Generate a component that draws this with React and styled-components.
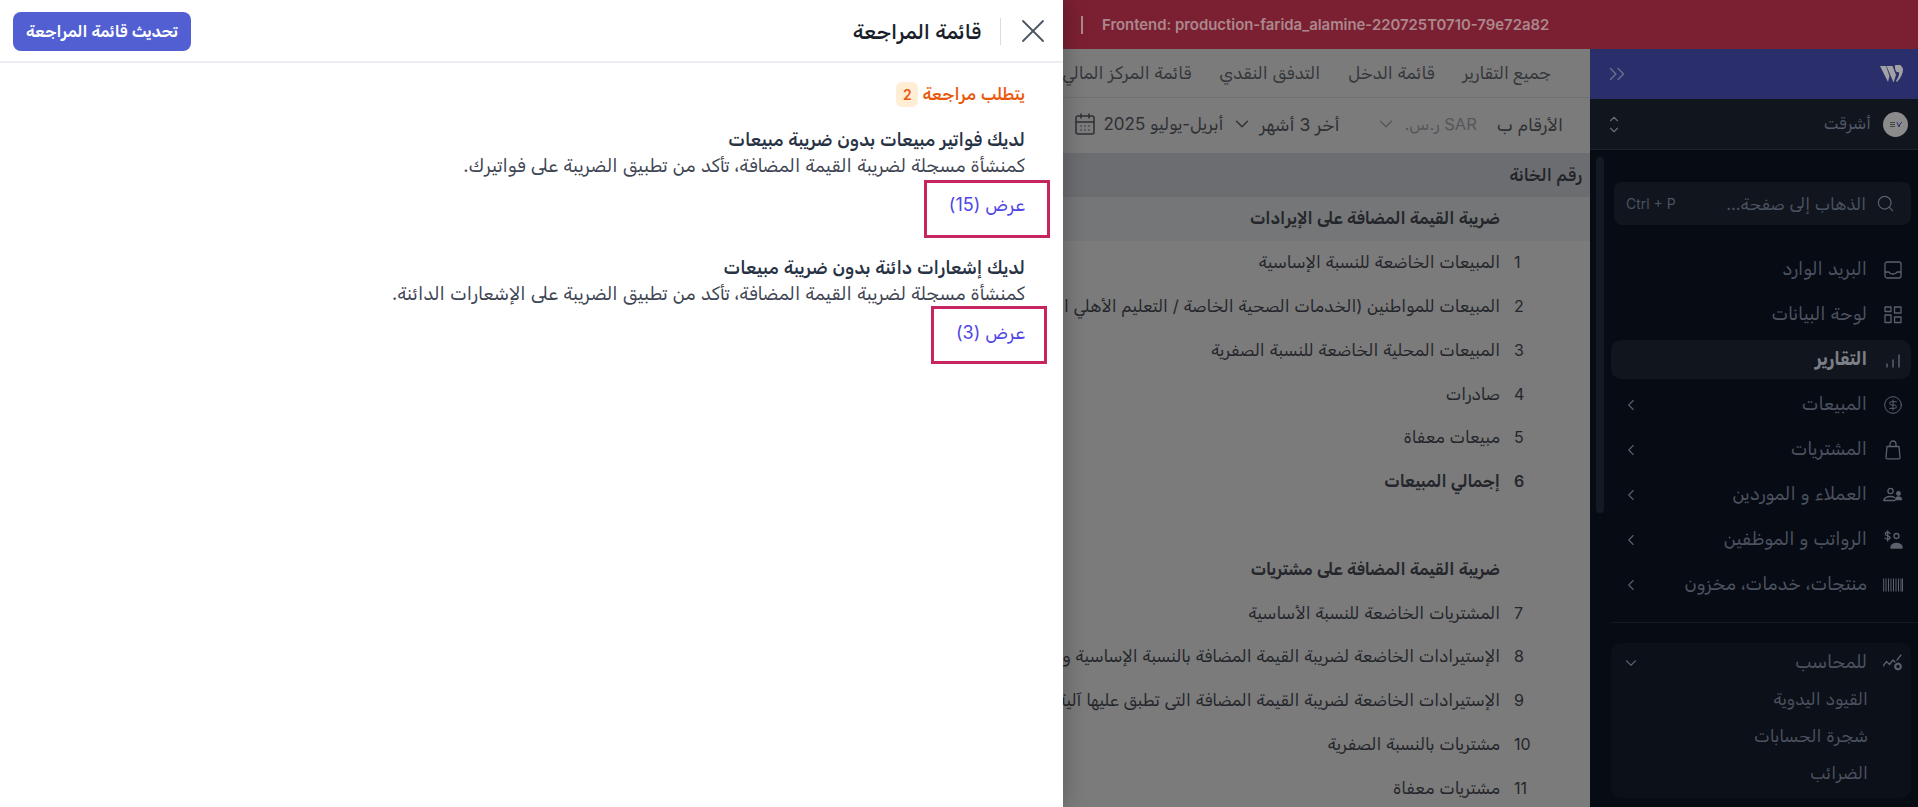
import React from 'react';
import styled, { createGlobalStyle } from 'styled-components';
import { ChevronLeft, ChevronDown, ChevronUp, ChevronsRight, Search, CircleDollarSign, CalendarDays, X } from 'lucide-react';

const FONT = `"Inter", "Rubik", "Noto Sans Arabic", "DejaVu Sans", sans-serif`;

const Global = createGlobalStyle`
  html, body { margin: 0; padding: 0; height: 100%; overflow: hidden; }
  body { font-family: ${FONT}; background: #7b7b7b; }
  * { box-sizing: border-box; }
`;

const Page = styled.div`position: relative; width: 1918px; height: 807px; overflow: hidden; display: flex; flex-direction: column;`;
const TopBar = styled.div`height: 49px; background: #7b2032; display: flex; align-items: center; direction: ltr; padding-left: 1081px; flex: none;`;
const TopDivider = styled.span`width: 2px; height: 18px; background: #a98a8e; margin-right: 19px;`;
const BuildInfo = styled.span`font: 600 14.9px/20px Inter, sans-serif; color: #ab888d; white-space: nowrap;`;
const Shell = styled.div`flex: 1; display: flex; min-height: 0;`;

const Sidebar = styled.aside`position: relative; width: 328px; flex: none; background: #070b14; display: flex; flex-direction: column;`;
const LogoBar = styled.div`height: 50px; background: #2a2f6b; display: flex; align-items: center; justify-content: space-between; padding: 0 14px 0 14px; flex: none;`;
const OrgBar = styled.div`height: 51px; background: #11151d; border-bottom: 1px solid #1e2229; display: flex; align-items: center; gap: 12px; padding: 0 10px 0 17px; flex: none; color: #535a69; font-size: 16px;`;
const Avatar = styled.span`width: 25px; height: 25px; border-radius: 50%; background: #8b8b8b; display: flex; align-items: center; justify-content: center; flex: none;`;
const OrgName = styled.span`flex: 1; padding-bottom: 2px;`;
const UpDown = styled.span`display: flex; flex-direction: column; color: #676c75; line-height: 0; svg + svg { margin-top: -3px; }`;
const Scrollbar = styled.div`position: absolute; left: 6px; top: 108px; width: 8px; height: 356px; border-radius: 4px; background: #141924;`;
const SideBody = styled.div`flex: 1; padding: 32px 7px 0 21px; display: flex; flex-direction: column;`;
const SearchBox = styled.div`height: 43px; width: 297px; align-self: flex-start; background: #11151d; border-radius: 8px; display: flex; align-items: center; gap: 10px; padding: 0 16px 0 12px; font-size: 16.7px; flex: none;`;
const SearchText = styled.span`flex: 1; color: #4a5361;`;
const Shortcut = styled.span`direction: ltr; font: 400 14px Inter, sans-serif; color: #4a5361;`;
const NavList = styled.nav`margin-top: 25px; display: flex; flex-direction: column; gap: 6px;`;
const NavItem = styled.div`height: 39px; display: flex; align-items: center; gap: 16px; padding: 0 8px 0 11px; border-radius: 10px; font-size: 18px;
  color: ${p => (p.$active ? '#7c7f85' : '#4b5260')}; font-weight: ${p => (p.$active ? 700 : 400)};
  background: ${p => (p.$active ? '#11151d' : 'transparent')};`;
const NavIcon = styled.span`width: 20px; height: 20px; display: flex; align-items: center; justify-content: center; color: #5a606c; flex: none;`;
const NavLabel = styled.span`flex: 1; white-space: nowrap; padding-bottom: 2px;`;
const NavChevron = styled.span`display: flex; color: #5a606c;`;
const SideRule = styled.div`height: 1px; background: #141820; margin: 18px 0 20px; margin-right: -7px;`;
const Group = styled.div`background: #0c1018; border-radius: 10px; padding-bottom: 5px; display: flex; flex-direction: column;`;
const SubItem = styled.div`height: 37px; display: flex; align-items: center; padding: 0 43px 3px 0; color: #4b5260; font-size: 17px;`;

const Main = styled.main`flex: 1; min-width: 0; background: #7b7b7b; display: flex; flex-direction: column; overflow: hidden;`;
const Tabs = styled.div`height: 49px; flex: none; display: flex; align-items: center; gap: 28px; padding-right: 39px; border-bottom: 1px solid #707174; font-size: 17px; color: #34363a; white-space: nowrap;`;
const Filters = styled.div`height: 52px; flex: none; display: flex; align-items: center; padding-right: 27px; font-size: 17.5px; color: #2e3034; white-space: nowrap;`;
const Currency = styled.span`display: flex; align-items: center; gap: 8px; margin-right: 20px; color: #55575b; font-size: 16.5px;`;
const Period = styled.span`display: flex; align-items: center; gap: 6px; margin-right: 35px;`;
const DateRange = styled.span`display: flex; align-items: center; gap: 7px; margin-right: 8px; font-size: 17px;`;
const HeadRow = styled.div`height: 44px; margin-top: 3px; flex: none; display: flex; align-items: center; padding-right: 8px; background: #6c6d70; color: #212329; font-size: 17px; font-weight: 500;`;
const Row = styled.div`height: 43.8px; flex: none; display: flex; align-items: center; white-space: nowrap; font-size: 16.8px; color: #24262b; padding-bottom: 1px;
  font-weight: ${p => (p.$bold ? 600 : 400)};
  background: ${p => (p.$tint ? '#757678' : 'transparent')};`;
const RowNum = styled.span`width: 76px; flex: none; text-align: left; font-family: Inter, sans-serif; font-size: 16px;`;
const RowLabel = styled.span`padding-right: 14px;`;

const Drawer = styled.section`position: absolute; left: 0; top: 0; bottom: 0; width: 1063px; background: #fff; box-shadow: 0 0 22px rgba(0,0,0,.28); display: flex; flex-direction: column;`;
const DrawerHead = styled.header`height: 63px; flex: none; border-bottom: 2px solid #eceef3; display: flex; align-items: center; padding: 1px 10px 0 13px;`;
const CloseBtn = styled.span`display: flex; color: #4b5563; flex: none;`;
const HeadRule = styled.span`width: 1px; height: 27px; background: #d9dce2; margin: 0 12px 0 19px; flex: none;`;
const Title = styled.h1`margin: 0; flex: 1; font-size: 20.4px; font-weight: 500; color: #1a1f2b;`;
const Refresh = styled.button`height: 39px; width: 178px; border: 0; border-radius: 8px; background: #515fd3; color: #fff; font: 600 16px ${FONT};`;
const DrawerBody = styled.div`padding: 18px 38px 0 0; display: flex; flex-direction: column; align-items: flex-start;`;
const Needs = styled.div`display: flex; align-items: center; gap: 4px; height: 26px; color: #ea580c; font-size: 17px; font-weight: 500;`;
const Badge = styled.span`width: 22px; height: 25px; border-radius: 6px; background: #ffedd5; display: flex; align-items: center; justify-content: center; font: 600 14px Inter, sans-serif;`;
const Check = styled.article`margin-top: ${p => p.$top}px; display: flex; flex-direction: column;`;
const CheckTitle = styled.h2`margin: 0; font-size: 18.1px; line-height: 25px; font-weight: 500; color: #273244;`;
const CheckText = styled.p`margin: 0; font-size: 18.2px; line-height: 27px; color: #3f4654;`;
const LinkWrap = styled.a`position: relative; align-self: flex-start; margin-top: ${p => p.$top}px; color: #4f46e5; font-size: 18px; line-height: 24px;`;
const Callout = styled.span`position: absolute; top: ${p => p.$t}px; right: ${p => p.$r}px; bottom: ${p => p.$b}px; left: ${p => p.$l}px; border: 3px solid #c72560;`;

const Ico = ({ children, w = 20, h = 20 }) => (
  <svg width={w} height={h} viewBox={`0 0 ${w} ${h}`} fill="none" stroke="currentColor" strokeWidth="1.3" strokeLinecap="round" strokeLinejoin="round">{children}</svg>
);
const Inbox = () => <Ico><rect x="2" y="2" width="16" height="16" rx="2" /><path d="M2 12h4c.6 1.400 2 2 4 2s3.400-.6 4-2h4" /></Ico>;
const Dash = () => <Ico><rect x="2" y="2" width="6" height="4.500" /><rect x="11.500" y="2" width="6.500" height="6" /><rect x="2" y="10" width="6" height="7.500" /><rect x="11.500" y="12" width="6.500" height="5.500" /></Ico>;
const Bars = () => <Ico><path d="M4 17v-3M10 17v-7M16 17V5" strokeWidth="1.500" /></Ico>;
const Bag = () => <Ico><path d="M4 6.500h12l1 11a1.200 1.200 0 0 1-1.200 1.300H4.200A1.200 1.200 0 0 1 3 17.500z" /><path d="M7 6.500V4a3 3 0 0 1 6 0v2.500" /></Ico>;
const People = () => <Ico><circle cx="7.500" cy="6" r="2.600" /><path d="M.8 15.500c.6-2.600 3.400-4 6.700-4 1.600 0 3 .3 4 1" /><path d="M.8 15.500h11" /><circle cx="15.500" cy="8.500" r="1.800" fill="currentColor" /><path d="M12.500 14.500c.3-1.600 1.500-2.500 3-2.500s2.700.9 3 2.500z" fill="currentColor" /></Ico>;
const Payroll = () => <Ico><path d="M7 3.500C6.400 2.600 5.600 2.200 4.600 2.200 3.300 2.200 2.300 3 2.300 4c0 2.400 4.800 1.200 4.800 3.600 0 1-1 1.800-2.400 1.800-1.200 0-2.100-.5-2.700-1.400M4.700 1v10" /><circle cx="13.500" cy="6" r="2.500" /><path d="M8 18v-1c0-2 2.500-3.500 5.500-3.500s5.500 1.500 5.500 3.500v1z" fill="currentColor" /></Ico>;
const Barcode = () => <Ico><path d="M.7 3.500v13M3 3.500v13M5.500 3.500v13M8 3.500v13M10.500 3.500v13M13 3.500v13M15.500 3.500v13M18 3.500v13M19.500 3.500v13" strokeWidth="1" strokeLinecap="butt" /></Ico>;
const Accountant = () => <Ico><path d="M0 13l3.500-4.500 3 3L10 7l2 2" /><path d="M14 7l4-5" /><circle cx="15" cy="13.500" r="2.800" strokeWidth="2.200" strokeDasharray="2 1" /></Ico>;
const Logo = () => (
  <svg width="24" height="18" viewBox="0 0 24 18" fill="#a1a1a6"><path d="M0 1h6l3.500 10L8 17zM6.500 1h6l3.500 9-2.500 7.500z" /><path d="M15 2.500a3 3 0 0 1 6-1.500c3.500 2 2.500 9-4 16l-1-1c2-3 3.500-6 3-9-2 1-4 -1-4-4.500z" /></svg>
);

const group1 = [
  ['1', 'المبيعات الخاضعة للنسبة الإساسية'],
  ['2', 'المبيعات للمواطنين (الخدمات الصحية الخاصة / التعليم الأهلي الخاص)'],
  ['3', 'المبيعات المحلية الخاضعة للنسبة الصفرية'],
  ['4', 'صادرات'],
  ['5', 'مبيعات معفاة'],
];
const group2 = [
  ['7', 'المشتريات الخاضعة للنسبة الأساسية'],
  ['8', 'الإستيرادات الخاضعة لضريبة القيمة المضافة بالنسبة الإساسية و الخاضعة للنسبة'],
  ['9', 'الإستيرادات الخاضعة لضريبة القيمة المضافة التى تطبق عليها آلية الإحتساب العكسي'],
  ['10', 'مشتريات بالنسبة الصفرية'],
  ['11', 'مشتريات معفاة'],
];
const nav = [
  [<Inbox />, 'البريد الوارد', false],
  [<Dash />, 'لوحة البيانات', false],
  [<Bars />, 'التقارير', false, true],
  [<CircleDollarSign size={22} strokeWidth={1.2} />, 'المبيعات', true],
  [<Bag />, 'المشتريات', true],
  [<People />, 'العملاء و الموردين', true],
  [<Payroll />, 'الرواتب و الموظفين', true],
  [<Barcode />, 'منتجات، خدمات، مخزون', true],
];

export default function App() {
  return (
    <Page dir="rtl">
      <Global />
      <TopBar><TopDivider /><BuildInfo>Frontend: production-farida_alamine-220725T0710-79e72a82</BuildInfo></TopBar>
      <Shell>
        <Sidebar>
          <LogoBar><Logo /><ChevronsRight size={26} color="#6b6e8c" strokeWidth={1.3} /></LogoBar>
          <OrgBar>
            <Avatar><svg width="14" height="7" viewBox="0 0 14 7"><path d="M1 1h5v1H1zM1 3h5v1H1zM1 5h5v1H1z" fill="#444" /><path d="M8 1l2 5 1-3 2-2" stroke="#2a2f6b" fill="none" /></svg></Avatar>
            <OrgName>أشرقت</OrgName>
            <UpDown><ChevronUp size={14} /><ChevronDown size={14} /></UpDown>
          </OrgBar>
          <Scrollbar />
          <SideBody>
            <SearchBox>
              <Search size={19} strokeWidth={1.5} color="#5a606c" />
              <SearchText>الذهاب إلى صفحة...</SearchText>
              <Shortcut>Ctrl + P</Shortcut>
            </SearchBox>
            <NavList>
              {nav.map(([icon, label, chev, active]) => (
                <NavItem key={label} $active={active}>
                  <NavIcon>{icon}</NavIcon>
                  <NavLabel>{label}</NavLabel>
                  {chev && <NavChevron><ChevronLeft size={18} strokeWidth={1.5} /></NavChevron>}
                </NavItem>
              ))}
            </NavList>
            <SideRule />
            <Group>
              <NavItem>
                <NavIcon><Accountant /></NavIcon>
                <NavLabel>للمحاسب</NavLabel>
                <NavChevron><ChevronDown size={18} strokeWidth={1.5} /></NavChevron>
              </NavItem>
              <SubItem>القيود اليدوية</SubItem>
              <SubItem>شجرة الحسابات</SubItem>
              <SubItem>الضرائب</SubItem>
            </Group>
          </SideBody>
        </Sidebar>
        <Main>
          <Tabs>
            <span>جميع التقارير</span>
            <span>قائمة الدخل</span>
            <span>التدفق النقدي</span>
            <span>قائمة المركز المالي</span>
          </Tabs>
          <Filters>
            <span>الأرقام ب</span>
            <Currency>SAR ر.س. <ChevronDown size={22} strokeWidth={1.5} /></Currency>
            <Period>أخر 3 أشهر <ChevronDown size={22} strokeWidth={1.5} /></Period>
            <DateRange>أبريل-يوليو 2025 <CalendarDays size={24} strokeWidth={1.5} /></DateRange>
          </Filters>
          <HeadRow>رقم الخانة</HeadRow>
          <Row $bold $tint><RowNum /><RowLabel>ضريبة القيمة المضافة على الإيرادات</RowLabel></Row>
          {group1.map(([n, t]) => <Row key={n}><RowNum>{n}</RowNum><RowLabel>{t}</RowLabel></Row>)}
          <Row $bold><RowNum>6</RowNum><RowLabel>إجمالي المبيعات</RowLabel></Row>
          <Row />
          <Row $bold><RowNum /><RowLabel>ضريبة القيمة المضافة على مشتريات</RowLabel></Row>
          {group2.map(([n, t]) => <Row key={n}><RowNum>{n}</RowNum><RowLabel>{t}</RowLabel></Row>)}
        </Main>
      </Shell>
      <Drawer>
        <DrawerHead>
          <CloseBtn><X size={40} strokeWidth={1.1} /></CloseBtn>
          <HeadRule />
          <Title>قائمة المراجعة</Title>
          <Refresh>تحديث قائمة المراجعة</Refresh>
        </DrawerHead>
        <DrawerBody>
          <Needs>يتطلب مراجعة <Badge>2</Badge></Needs>
          <Check $top={20}>
            <CheckTitle>لديك فواتير مبيعات بدون ضريبة مبيعات</CheckTitle>
            <CheckText>كمنشأة مسجلة لضريبة القيمة المضافة، تأكد من تطبيق الضريبة على فواتيرك.</CheckText>
            <LinkWrap $top={14}>عرض (15)<Callout $t={-13} $r={-25} $b={-21} $l={-25} /></LinkWrap>
          </Check>
          <Check $top={38}>
            <CheckTitle>لديك إشعارات دائنة بدون ضريبة مبيعات</CheckTitle>
            <CheckText>كمنشأة مسجلة لضريبة القيمة المضافة، تأكد من تطبيق الضريبة على الإشعارات الدائنة.</CheckText>
            <LinkWrap $top={14}>عرض (3)<Callout $t={-15} $r={-22} $b={-19} $l={-25} /></LinkWrap>
          </Check>
        </DrawerBody>
      </Drawer>
    </Page>
  );
}
